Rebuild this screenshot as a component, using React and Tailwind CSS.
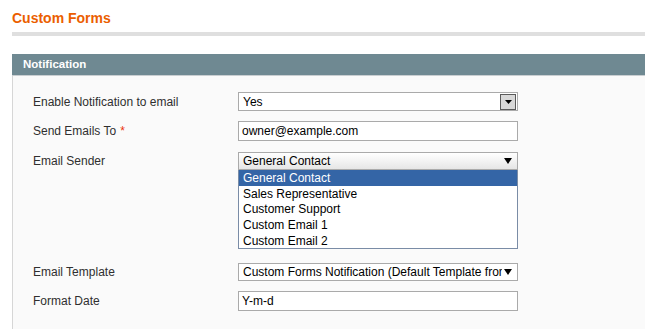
const SENDERS = ["General Contact", "Sales Representative", "Customer Support", "Custom Email 1", "Custom Email 2"];

function Label({ children, required, h }) {
  return (
    <div className={`flex items-center text-[12px] text-[#2f2f2f] ${h}`}>
      {children}
      {required && <span className="ml-[4px] text-[#eb340a]">*</span>}
    </div>
  );
}

function Arrow() {
  return (
    <svg width="8" height="6" viewBox="0 0 8 6" className="shrink-0">
      <path d="M0 0 H8 L4 6 Z" fill="#000" />
    </svg>
  );
}

export default function App() {
  return (
    <div className="min-h-[329px] bg-white font-['Liberation_Sans',Arial,sans-serif] text-black">
      <div className="ml-[12px] mr-[10px] pt-[10px]">
        <h1 className="h-[17px] text-[14px] leading-[17px] font-bold text-[#eb5e00]">Custom Forms</h1>
        <div className="mt-[5px] h-[4px] bg-[#dfdfdf]" />

        <div className="mt-[18px]">
          <div className="flex h-[22px] items-center border-b border-[#c9ced1] bg-[#6f8992] pl-[11px] text-[11.5px] font-bold text-white">
            Notification
          </div>

          <div className="border-l border-[#d6d6d6] bg-[#fafafa] pl-[20px] pt-[16px] pb-[20px]">
            <div className="grid grid-cols-[205px_280px] gap-y-[10px]">
              {/* Enable Notification */}
              <Label h="h-[19px]">Enable Notification to email</Label>
              <div className="flex h-[19px] items-center justify-between border border-[#aaaaaa] bg-white pl-[4px] pr-[1px] text-[12px]">
                <span>Yes</span>
                <div className="flex h-[16px] w-[16px] items-center justify-center border border-[#5a5a5a] bg-[#d8d8d8]">
                  <svg width="7" height="4" viewBox="0 0 7 4">
                    <path d="M0 0 H7 L3.5 4 Z" fill="#000" />
                  </svg>
                </div>
              </div>

              {/* Send Emails To */}
              <Label h="h-[20px]" required>Send Emails To</Label>
              <div className="flex h-[20px] items-center border border-[#aaaaaa] bg-white pl-[3px] text-[12px]">
                owner@example.com
              </div>

              {/* Email Sender */}
              <div className="mt-[1px]">
                <Label h="h-[18px]">Email Sender</Label>
              </div>
              <div className="mt-[1px]">
                <div className="flex h-[18px] items-center justify-between border border-[#aaaaaa] bg-gradient-to-b from-white to-[#e6e6e6] pl-[4px] pr-[5px] text-[12px]">
                  <span>General Contact</span>
                  <Arrow />
                </div>
                <div className="border border-t-0 border-[#7a8ca6] bg-white text-[12px]">
                  {SENDERS.map((s, i) => (
                    <div
                      key={s}
                      className={`flex h-[15.6px] items-center pl-[4px] pt-[1px] ${i === 0 ? "bg-[#3465a6] text-white" : ""}`}
                    >
                      {s}
                    </div>
                  ))}
                </div>
              </div>

              {/* Email Template */}
              <div className="mt-[4px]">
                <Label h="h-[18px]">Email Template</Label>
              </div>
              <div className="mt-[4px] flex h-[18px] items-center border border-[#aaaaaa] bg-white pl-[4px] pr-[5px] text-[12px]">
                <span className="flex-1 overflow-hidden whitespace-nowrap">
                  Custom Forms Notification (Default Template from Locale)
                </span>
                <span className="ml-[2px]">
                  <Arrow />
                </span>
              </div>

              {/* Format Date */}
              <Label h="h-[20px]">Format Date</Label>
              <div className="flex h-[20px] items-center border border-[#aaaaaa] bg-white pl-[3px] text-[12px]">
                Y-m-d
              </div>
            </div>
          </div>
        </div>
      </div>
    </div>
  );
}
